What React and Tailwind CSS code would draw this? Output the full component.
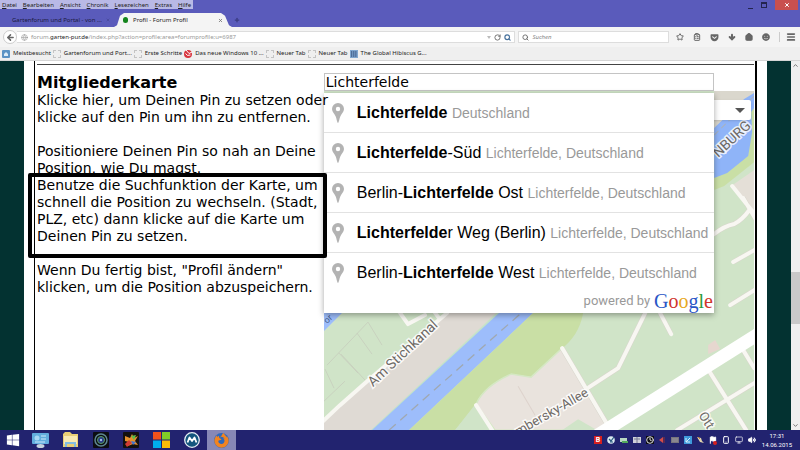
import { useState } from 'react';
import { Star, ClipboardList, ArrowDown, House, Menu, Search, RotateCw, ArrowLeft, Globe, X, Plus, Monitor, Volume2, Flag, Smartphone, Clock, ChevronUp, ChevronDown } from 'lucide-react';
import { FaGetPocket, FaWindows, FaSmile, FaFirefoxBrowser } from 'react-icons/fa';

const menuItems = ['Datei', 'Bearbeiten', 'Ansicht', 'Chronik', 'Lesezeichen', 'Extras', 'Hilfe'];

const bookmarks = [
    { icon: 'most', label: 'Meistbesucht' },
    { icon: 'empty', label: 'Gartenforum und Port...' },
    { icon: 'empty', label: 'Erste Schritte' },
    { icon: 'swirl', label: 'Das neue Windows 10 ...' },
    { icon: 'empty', label: 'Neuer Tab' },
    { icon: 'empty', label: 'Neuer Tab' },
    { icon: 'grid', label: 'The Global Hibiscus G...' },
];

const suggestions = [
    { pre: '', match: 'Lichterfelde', post: '', area: 'Deutschland' },
    { pre: '', match: 'Lichterfelde', post: '-Süd', area: 'Lichterfelde, Deutschland' },
    { pre: 'Berlin-', match: 'Lichterfelde', post: ' Ost', area: 'Lichterfelde, Deutschland' },
    { pre: '', match: 'Lichterfelde', post: 'r Weg (Berlin)', area: 'Lichterfelde, Deutschland' },
    { pre: 'Berlin-', match: 'Lichterfelde', post: ' West', area: 'Lichterfelde, Deutschland' },
];

function BookmarkIcon({ type }) {
    if (type === 'most') {
        return (
            <svg className="w-2 h-2 shrink-0" viewBox="0 0 8 8">
                <rect width="8" height="8" rx="1" fill="#5b93c5" />
                <path d="M2 6V4l2-2 2 2v2z" fill="#dcecf8" />
            </svg>
        );
    }
    if (type === 'swirl') {
        return (
            <svg className="w-2 h-2 shrink-0" viewBox="0 0 8 8">
                <circle cx="4" cy="4" r="4" fill="#d8343f" />
                <path d="M2 0L5 3.5 8 2M1.5 3.5Q3 6.5 6.5 5" stroke="#fff" strokeWidth="1" fill="none" />
            </svg>
        );
    }
    if (type === 'grid') {
        return (
            <svg className="w-2 h-2 shrink-0" viewBox="0 0 8 8">
                <rect width="8" height="8" fill="#7fa6cf" />
                <path d="M1 2h6M1 4h6M1 6h6" stroke="#1d3563" strokeWidth="1.2" strokeDasharray="1.3 .8" />
            </svg>
        );
    }
    return <span className="w-2 h-2 shrink-0 border border-dashed border-[#c4c4c4]" />;
}

function TitleBar() {
    return (
        <div className="bg-[#5a5bbb] h-[27px] shrink-0 flex flex-col justify-between">
            <div className="flex justify-between items-start">
                <nav className="flex gap-[6px] px-[2px] h-[9px] bg-[#b9b9e6]">
                    {menuItems.map(item => (
                        <button key={item} className="text-[6px] leading-[10px] text-[#222]">
                            <span className="underline">{item[0]}</span>{item.slice(1)}
                        </button>
                    ))}
                </nav>
                <div className="flex items-center gap-2">
                    <button aria-label="Minimieren" className="w-[5px] h-[7px] border-b border-[#23244f]" />
                    <button aria-label="Wiederherstellen" className="w-[6px] h-[6px] border border-t-2 border-[#23244f]" />
                    <button aria-label="Schließen" className="w-[23px] h-[10px] bg-[#c9504f] text-white flex items-center justify-center mr-[2px]">
                        <X size={6} strokeWidth={4} />
                    </button>
                </div>
            </div>
            <div className="flex items-end h-[14px]">
                <button className="w-[114px] pl-3 h-[14px] text-[6px] text-[#1a1a3d] flex items-center whitespace-nowrap">
                    Gartenforum und Portal - von ...
                    <X size={4} strokeWidth={3} className="ml-1 shrink-0 text-[#3d3e86]" />
                </button>
                <div className="w-[118px] h-[14px] pl-[9px] pr-[9px] bg-[#f4f4f4] flex items-center text-[6px] text-[#222] [clip-path:polygon(0_100%,3px_88%,6px_20%,10px_0,107px_0,111px_20%,115px_88%,118px_100%)]">
                    <span className="w-[5px] h-[6px] rounded-full bg-[#14841d] mr-[5px]" />
                    <span className="flex-1">Profil - Forum Profil</span>
                    <button aria-label="Tab schließen" className="text-[#777]"><X size={5} strokeWidth={4} /></button>
                </div>
                <button aria-label="Neuer Tab" className="h-[14px] pl-[2px] text-[#3b3c84]"><Plus size={6} strokeWidth={5} /></button>
            </div>
        </div>
    );
}

function NavBar() {
    return (
        <div className="h-5 shrink-0 bg-[#f4f4f4] flex items-center px-[3px] text-[#666]">
            <button aria-label="Zurück" className="w-[14px] h-[14px] rounded-full border border-[#ccc] bg-white flex items-center justify-center shrink-0">
                <ArrowLeft size={9} strokeWidth={4} />
            </button>
            <div className="flex-[502] h-3 bg-white border border-[#ddd] border-l-0 flex items-center pl-1 pr-[3px] gap-[3px]">
                <Globe size={7} className="text-[#999]" />
                <div className="flex-1 text-[6px] text-[#999] whitespace-nowrap">
                    forum.<span className="text-[#222]">garten-pur.de</span>/index.php?action=profile;area=forumprofile;u=6987
                </div>
                <span className="border-x-2 border-x-transparent border-t-[3px] border-t-[#bbb]" />
                <RotateCw size={7} strokeWidth={3} />
                <Search size={7} strokeWidth={4} className="text-[#47719c]" />
            </div>
            <label className="flex-[146] ml-[3px] h-3 bg-white border border-[#ddd] flex items-center px-[3px] gap-[3px]">
                <Search size={7} strokeWidth={3} className="shrink-0" />
                <input placeholder="Suchen" aria-label="Suchen" className="w-full h-[10px] text-[6px] italic placeholder:text-[#888] outline-none" />
            </label>
            <div className="flex items-center gap-[9px] pl-[7px] pr-px">
                <button aria-label="Lesezeichen setzen"><Star size={8} strokeWidth={3} /></button>
                <button aria-label="Lesezeichen anzeigen"><ClipboardList size={8} strokeWidth={3} /></button>
                <button aria-label="Pocket"><FaGetPocket size={9} /></button>
                <button aria-label="Downloads"><ArrowDown size={8} strokeWidth={6} /></button>
                <button aria-label="Startseite"><House size={8} strokeWidth={4} fill="currentColor" /></button>
                <button aria-label="Chat"><FaSmile size={8} /></button>
                <button aria-label="Menü" className="border-l border-[#ccc] pl-[6px]"><Menu size={10} strokeWidth={4} /></button>
            </div>
        </div>
    );
}

function BookmarksBar() {
    return (
        <div className="h-[14px] shrink-0 bg-[#efefef] border-b border-[#d5d5d5] flex items-center gap-[2px] pl-[2px]">
            {bookmarks.map((b, i) => (
                <a key={i} href="#" className="flex items-center gap-[3px] text-[6px] text-[#222] whitespace-nowrap">
                    <BookmarkIcon type={b.icon} />
                    {b.label}
                </a>
            ))}
        </div>
    );
}

function MapCanvas() {
    return (
        <svg className="block w-full h-full" viewBox="324 91 430 339" preserveAspectRatio="xMinYMin slice" fontFamily="Roboto, sans-serif">
            <rect x="324" y="91" width="430" height="339" fill="#d0e4c8" />
            {/* water in the corners */}
            <path d="M324 313h18l-18 18z" fill="#9dbdfb" />
            <path d="M714 91h40v3l-40 40z" fill="#dad7cd" />
            <path d="M754 105V162L724 186 714 190V170z" fill="#c9dfa5" />
            <path d="M754 93L744 99 714 128V178L727 173 748 156 752 132 751 112 754 108z" fill="#8fb4f8" />
            <path d="M731 186L754 170V214z" fill="#e4dfd7" />
            <path d="M714 135L754 96" stroke="#a9b2bd" strokeDasharray="6 4" />
            {/* canal and both banks */}
            <path d="M324 430V421L447 313H496L371 430z" fill="#dfdad4" />
            <path d="M371 430L497 313H500L373 430z" fill="#c2e2cc" />
            <path d="M372 430L499 313H533L409 430z" fill="#9dbdfb" />
            <path d="M389 430L521 313" stroke="#a0a8b0" strokeWidth="1.3" strokeDasharray="9 6" />
            <path d="M409 430L533 313H583Q579 336 560 350L531 377 511 374Q484 386 476 403L455 430z" fill="#c9dfa5" />
            <path d="M455 430L476 404 492 430z" fill="#d0e4c8" />
            <path d="M495 430L476 404Q484 386 511 374L531 377 562 348 607 424 597 430z" fill="#e9e3dd" stroke="#d5e8c4" strokeWidth="1.5" />
            <path d="M518 386L535 415" stroke="#ddd2cc" />
            <path d="M597 430L578 419 562 430z" fill="#d0e4c8" />
            <path d="M708 354V345L715 340 720 349z" fill="#e6d7cf" />
            {/* garden plots */}
            <path d="M327 365L368 322 382 345M357 333L372 354M339 353L358 373M325 369L334 388M341 354L366 381M324 401L345 381" fill="none" stroke="#c6cdbc" strokeWidth=".8" />
            {/* side roads */}
            <g fill="none" stroke="#d8d6cc" strokeWidth="5" strokeLinejoin="round">
                <path d="M562 348L607 424M589 387L618 368 645 313M660 313L671 334M677 430L754 383M709 371L746 430M743 350L754 368M733 262L754 250M730 305L754 290M714 234Q724 226 734 224 742 220 750 209M743 198L756 220" />
            </g>
            <g fill="none" stroke="#f8f7f2" strokeWidth="4" strokeLinejoin="round" strokeLinecap="round">
                <path d="M322 422L340 405 366 382 447 313M398 310L408 324 425 315M433 310L439 318" />
                <path d="M476 405L492 430M562 348L607 424M589 387L618 368 645 313M660 313L671 334M677 430L754 383M709 371L746 430M743 350L754 368M733 262L756 249M730 305L756 289M714 234Q724 226 734 224 742 220 750 209M743 198L756 220M732 186L756 216" />
            </g>
            <path d="M596 436L758 334" stroke="#fff" strokeWidth="13" />
            {/* street names */}
            <g fill="#6e6a66" stroke="#fff" strokeWidth="3" paintOrder="stroke" strokeOpacity=".8">
                <text transform="translate(373 387) rotate(-43)" fontSize="14">Am Stichkanal</text>
                <text transform="translate(589 395) rotate(-30)" fontSize="13" textAnchor="end">mbersky-Allee</text>
                <text transform="translate(698 415) rotate(58)" fontSize="13">Ott</text>
                <text transform="translate(718 158) rotate(-43)" fontSize="14">NBURG</text>
                <text transform="translate(327 324) rotate(-43)" fontSize="9" fill="#49628c" stroke="none">or</text>
            </g>
        </svg>
    );
}

function PinIcon() {
    return (
        <svg className="w-3 h-5 shrink-0" viewBox="0 0 12 20">
            <path fillRule="evenodd" d="M6 0a6 6 0 0 1 6 6c0 3-2.500 4.500-3.700 7.500C7.300 16 6.800 20 6 20s-1.300-4-2.300-6.500C2.500 10.500 0 9 0 6a6 6 0 0 1 6-6zm0 3.800a2.200 2.200 0 1 0 0 4.400 2.200 2.200 0 0 0 0-4.400z" fill="#b3b3b3" />
        </svg>
    );
}

function LocationPicker() {
    const [query, setQuery] = useState('Lichterfelde');

    return (
        <div className="w-3/5 relative flex flex-col">
            <input
                aria-label="Ort suchen"
                value={query}
                onChange={e => setQuery(e.target.value)}
                className="w-[calc(100%-40px)] h-[18px] shrink-0 border border-[#c4c4c4] bg-white px-px text-[14px] leading-4 outline-none"
            />
            <div className="relative flex-1 min-h-0">
                <MapCanvas />
                <button aria-label="Kartentyp" className="absolute top-[9px] right-[3px] w-24 h-5 bg-white rounded-[2px] shadow flex items-center justify-end pr-[6px]">
                    <span className="border-x-[5px] border-x-transparent border-t-[5px] border-t-[#555]" />
                </button>
            </div>
            <div className="absolute top-5 left-0 w-[calc(100%-40px)] bg-white shadow-[0_2px_6px_rgba(0,0,0,0.35)] font-['Liberation_Sans',Arial,sans-serif]">
                <ul>
                    {suggestions.map((s, i) => (
                        <li key={i} className="border-b border-[#e2e2e2] last:border-b-0">
                            <button className="w-full h-[39px] pl-2 flex items-center gap-[13px] text-left whitespace-nowrap" onClick={() => setQuery(s.pre + s.match + s.post)}>
                                <PinIcon />
                                <span className="text-base text-black">
                                    {s.pre}<b>{s.match}</b>{s.post} <span className="text-[14px] text-[#999]">{s.area}</span>
                                </span>
                            </button>
                        </li>
                    ))}
                </ul>
                <div className="h-[21px] flex items-center justify-end gap-1 pr-px pb-[3px]">
                    <span className="font-[Roboto,sans-serif] text-[13px] leading-5 text-[#999]">powered by</span>
                    <span className="font-['Liberation_Serif',serif] text-[20px] leading-5">
                        <span className="text-[#2a56c6]">G</span>
                        <span className="text-[#d0342c]">o</span>
                        <span className="text-[#e8a820]">o</span>
                        <span className="text-[#2a56c6]">g</span>
                        <span className="text-[#2b9a3e]">l</span>
                        <span className="text-[#d0342c]">e</span>
                    </span>
                </div>
            </div>
        </div>
    );
}

function Instructions() {
    return (
        <div className="w-2/5 relative z-10 text-[14px] leading-[17px] text-black whitespace-nowrap">
            <h1 className="text-base leading-[19px] font-bold">Mitgliederkarte</h1>
            <p className="mb-[17px]">
                Klicke hier, um Deinen Pin zu setzen oder<br />
                klicke auf den Pin um ihn zu entfernen.
            </p>
            <p>
                Positioniere Deinen Pin so nah an Deine<br />
                Position, wie Du magst.
            </p>
            <div className="relative mb-[17px]">
                <div className="absolute -top-1 -left-[9px] -right-[3px] -bottom-[13px] border-4 border-black rounded-[2px]" />
                <p>
                    Benutze die Suchfunktion der Karte, um<br />
                    schnell die Position zu wechseln. (Stadt,<br />
                    PLZ, etc) dann klicke auf die Karte um<br />
                    Deinen Pin zu setzen.
                </p>
            </div>
            <p>
                Wenn Du fertig bist, "Profil ändern"<br />
                klicken, um die Position abzuspeichern.
            </p>
        </div>
    );
}

function Scrollbar() {
    return (
        <div className="w-[9px] shrink-0 bg-[#efefef] flex flex-col items-center py-px text-[#666]">
            <ChevronUp size={7} strokeWidth={3} />
            <div className="flex-[204]" />
            <div className="w-[9px] flex-[52] bg-[#c9c9c9]" />
            <div className="flex-[98]" />
            <ChevronDown size={7} strokeWidth={3} />
        </div>
    );
}

function Taskbar() {
    return (
        <footer className="h-5 shrink-0 bg-[#22236f] flex items-center justify-between text-white">
            <div className="flex items-center">
                <button aria-label="Start" className="w-[25px] flex justify-center"><FaWindows size={14} /></button>
                <button aria-label="Desktop" className="w-[30px] flex justify-center">
                    <svg width="17" height="16" viewBox="0 0 17 16">
                        <rect x="0" y="1" width="17" height="11" rx="1" fill="#62aede" />
                        <circle cx="5" cy="6" r="2.500" fill="#a9d8f5" />
                        <path d="M9 4h5M9 7h5M3 10h10" stroke="#cdeafb" />
                        <ellipse cx="8.500" cy="14" rx="4" ry="2" fill="#c5d3de" />
                    </svg>
                </button>
                <button aria-label="Explorer" className="w-[31px] flex justify-center">
                    <svg width="17" height="16" viewBox="0 0 17 16">
                        <path d="M1 2l2-2h5l2 2h6v13H1z" fill="#e9cf76" />
                        <path d="M2 4h13v8H2z" fill="#f8eab2" />
                        <path d="M4 15v-4h9v4" fill="none" stroke="#83bde0" strokeWidth="2" />
                    </svg>
                </button>
                <button aria-label="Kamera" className="w-[30px] flex justify-center">
                    <svg width="16" height="16" viewBox="0 0 16 16">
                        <rect width="16" height="16" rx="1" fill="#0c0d12" />
                        <circle cx="8" cy="8" r="6" fill="none" stroke="#5d8792" strokeWidth="1.500" />
                        <circle cx="8" cy="8" r="3.500" fill="#273a86" stroke="#59a05f" />
                        <circle cx="8" cy="8" r="1.200" fill="#9fb8e6" />
                    </svg>
                </button>
                <button aria-label="Bildbearbeitung" className="w-[30px] flex justify-center">
                    <svg width="16" height="16" viewBox="0 0 16 16">
                        <rect width="16" height="16" rx="1" fill="#14100f" />
                        <path d="M2 4l5 2 2-4 2 4 4-2-3 5 3 4-5-1-5 2 1-4-4-1z" fill="#e5902e" />
                        <path d="M2 12l4-4 3 3-5 4z" fill="#d33b33" />
                        <path d="M8 4l5-1-2 5z" fill="#5ebd49" />
                        <path d="M8 9l5 1-3 3z" fill="#4476d0" />
                    </svg>
                </button>
                <button aria-label="Microsoft" className="w-[31px] flex justify-center">
                    <svg width="17" height="16" viewBox="0 0 17 16">
                        <path d="M0 0h8v7.500H0z" fill="#f1511b" />
                        <path d="M9 0h8v7.500H9z" fill="#80cc28" />
                        <path d="M0 8.500h8V16H0z" fill="#00adef" />
                        <path d="M9 8.500h8V16H9z" fill="#fbbc09" />
                    </svg>
                </button>
                <button aria-label="Mail" className="w-[30px] flex justify-center">
                    <svg width="16" height="16" viewBox="0 0 16 16">
                        <circle cx="8" cy="8" r="7.300" fill="#14567e" stroke="#e6eef4" strokeWidth="1.300" />
                        <path d="M3.500 10.500l2-5L8 9l2.500-3.500 2 5" fill="none" stroke="#fff" strokeWidth="1.800" strokeLinejoin="round" />
                    </svg>
                </button>
                <button aria-label="Firefox" className="w-[29px] h-5 bg-[#8788b6] flex items-center justify-center">
                    <span className="w-[15px] h-[15px] rounded-full bg-[#2e69bd] text-[#f28420] flex items-center justify-center">
                        <FaFirefoxBrowser size={15} />
                    </span>
                </button>
            </div>
            <div className="flex items-center pr-2 font-[Roboto,sans-serif]">
                <div className="flex items-center gap-[5px] mr-[6px]">
                    <span className="w-2 h-2 bg-[#d6201f] text-[7px] leading-2 font-bold text-center">B</span>
                    <svg width="8" height="8" viewBox="0 0 8 8"><circle cx="4" cy="4" r="3.800" fill="#dceaf2" /><path d="M2 3l2 2 3-4M3 6h3" stroke="#25567e" strokeWidth="1.200" fill="none" /></svg>
                    <svg width="8" height="8" viewBox="0 0 8 8"><path d="M0 2h7v4H0z" fill="#b8d7c2" /><path d="M2 5h6v2H2z" fill="#53a95c" /></svg>
                    <svg width="8" height="8" viewBox="0 0 8 8"><path d="M0 1h8v6H0z" fill="#cfd1da" /><path d="M1 3h6M4 1v6" stroke="#777992" /></svg>
                    <span className="w-2 h-2 bg-[#0d0d12] text-[#ddd]"><Clock size={8} strokeWidth={3} /></span>
                    <svg width="7" height="8" viewBox="0 0 7 8"><path d="M0 4l4-3v6z" fill="#d34d4a" /><path d="M5 1v6" stroke="#8f3039" /></svg>
                    <svg width="8" height="8" viewBox="0 0 8 8"><path d="M0 1h8v6H0z" fill="#77757e" /><path d="M1 3h6M1 5h6" stroke="#9d9aa0" /></svg>
                    <svg width="8" height="8" viewBox="0 0 8 8"><path d="M0 0h8v8H0z" fill="#3f9adb" /><path d="M2 6l4-4M2 2v4h4" stroke="#d8effd" fill="none" /></svg>
                    <svg width="7" height="8" viewBox="0 0 7 8"><path d="M0 1l4 1 1 3 2 2-4-1z" fill="#e3d5ae" /><path d="M1 1l2 2" stroke="#c78034" /></svg>
                    <span className="relative flex">
                        <Flag size={8} strokeWidth={3} fill="#fff" />
                        <span className="absolute -bottom-px right-0 w-1 h-1 rounded-full bg-[#d6201f]" />
                    </span>
                    <Smartphone size={8} strokeWidth={3} />
                    <Monitor size={8} strokeWidth={2} />
                    <Volume2 size={8} strokeWidth={3} fill="#fff" />
                </div>
                <div className="text-[6px] leading-[9px] text-center">
                    <div>17:31</div>
                    <div>14.06.2015</div>
                </div>
            </div>
        </footer>
    );
}

export default function App() {
    return (
        <div className="h-screen flex flex-col overflow-hidden font-['Noto_Sans',sans-serif]">
            <TitleBar />
            <NavBar />
            <BookmarksBar />
            <div className="flex-1 min-h-0 flex">
                <main className="flex-1 flex bg-[#033231] px-6">
                    <div className="flex-1 flex bg-white px-[10px] font-['DejaVu_Sans',Verdana,sans-serif]">
                        <section className="flex-1 flex flex-col border-l border-r-2 border-black pt-[3px] pl-[2px] pr-px">
                            <hr className="border-t border-[#444] mb-2" />
                            <div className="flex-1 min-h-0 flex">
                                <Instructions />
                                <LocationPicker />
                            </div>
                        </section>
                    </div>
                </main>
                <Scrollbar />
            </div>
            <Taskbar />
        </div>
    );
}
